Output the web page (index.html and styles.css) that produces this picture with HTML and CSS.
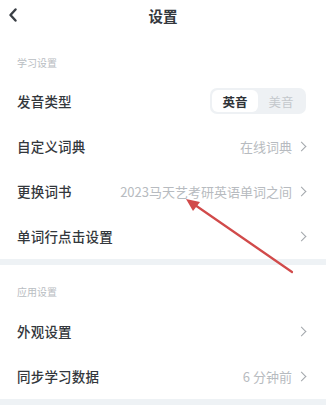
FILE: index.html
```html
<!DOCTYPE html>
<html lang="zh">
<head>
<meta charset="utf-8">
<link rel="stylesheet" href="styles.css">
</head>
<body>
<div class="page">
  <header class="header">
    <svg class="back" width="10" height="14" viewBox="0 0 10 14"><path d="M7.5 1.5 L2.5 7 L7.5 12.5" fill="none" stroke="#3a3f45" stroke-width="2.4" stroke-linecap="round" stroke-linejoin="round"/></svg>
    <div class="title">设置</div>
  </header>

  <section class="group">
    <div class="group-title first">学习设置</div>
    <div class="row">
      <span class="label">发音类型</span>
      <div class="toggle">
        <span class="opt on">英音</span>
        <span class="opt">美音</span>
      </div>
    </div>
    <div class="row">
      <span class="label">自定义词典</span>
      <span class="value">在线词典<i class="chev"></i></span>
    </div>
    <div class="row">
      <span class="label">更换词书</span>
      <span class="value">2023马天艺考研英语单词之间<i class="chev"></i></span>
    </div>
    <div class="row">
      <span class="label">单词行点击设置</span>
      <span class="value"><i class="chev"></i></span>
    </div>
  </section>

  <div class="band"></div>

  <section class="group">
    <div class="group-title">应用设置</div>
    <div class="row">
      <span class="label">外观设置</span>
      <span class="value"><i class="chev"></i></span>
    </div>
    <div class="row">
      <span class="label">同步学习数据</span>
      <span class="value">6 分钟前<i class="chev"></i></span>
    </div>
  </section>

  <div class="band"></div>

  <svg class="arrow" width="326" height="406" viewBox="0 0 326 406">
    <line x1="292" y1="272" x2="195" y2="205" stroke="#d14a4a" stroke-width="2.2" stroke-linecap="round"/>
    <polygon points="186,199 200,202 193,211" fill="#d14a4a"/>
  </svg>
</div>
</body>
</html>
```

FILE: styles.css
```css
* { box-sizing: border-box; margin: 0; padding: 0; }
html, body { background: #ffffff; }
body {
  font-family: "Noto Sans CJK SC", "Noto Sans", sans-serif;
  color: #2f3338;
  width: 326px;
  height: 406px;
  overflow: hidden;
}
.page { position: relative; width: 326px; height: 406px; }
.header {
  height: 32px;
  display: flex;
  align-items: center;
  justify-content: center;
  position: relative;
}
.back { position: absolute; left: 8px; top: 8px; }
.title { font-size: 14.5px; font-weight: 700; color: #34383d; line-height: 20px; }
.group { padding: 0 17px 0 17px; }
.group-title {
  font-size: 10px;
  line-height: 14px;
  color: #b9bdc2;
  height: 44px;
  padding-top: 20px;
}
.group-title.first { height: 46.5px; padding-top: 24px; }
.row {
  height: 45px;
  display: flex;
  align-items: center;
  justify-content: space-between;
}
.label { font-size: 13.5px; color: #33373c; font-weight: 500; letter-spacing: 0.2px; }
.value {
  display: flex;
  align-items: center;
  font-size: 13px;
  color: #b7bbc0;
}
.chev {
  display: inline-block;
  width: 7px;
  height: 7px;
  border-top: 1.5px solid #a2a6ab;
  border-right: 1.5px solid #a2a6ab;
  transform: rotate(45deg);
  margin-left: 6px;
  margin-right: 4px;
}
.toggle {
  display: flex;
  width: 96px;
  height: 26px;
  background: #eef1f4;
  border-radius: 7px;
  padding: 2px;
  margin-right: 3px;
}
.opt {
  flex: 1;
  display: flex;
  align-items: center;
  justify-content: center;
  font-size: 12.5px;
  color: #c4c8cc;
  border-radius: 6px;
}
.opt.on { background: #ffffff; color: #2f3338; font-weight: 700; }
.band { height: 6px; background: #eef2f5; }
.arrow { position: absolute; left: 0; top: 0; pointer-events: none; }
```
